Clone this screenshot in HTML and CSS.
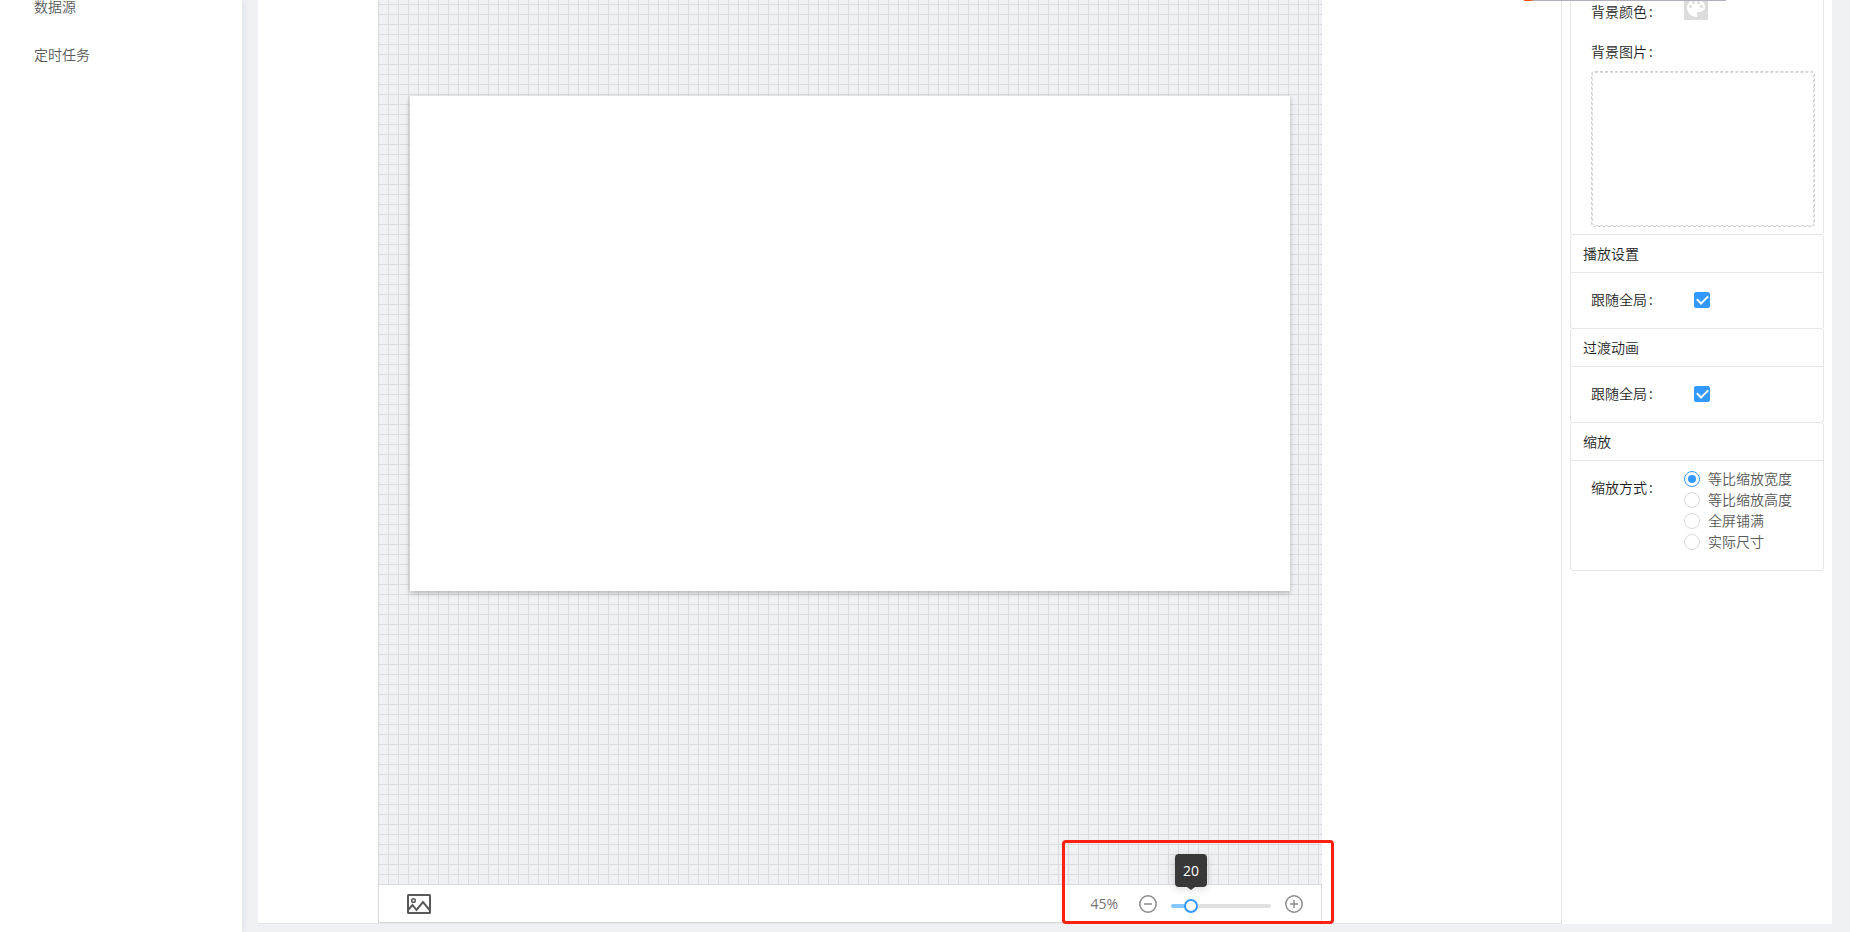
FILE: index.html
```html
<!DOCTYPE html>
<html lang="zh-CN">
<head>
<meta charset="utf-8">
<title>编辑器</title>
<link rel="stylesheet" href="styles.css">
</head>
<body>
<div class="app">
  <aside class="sidebar">
    <nav class="menu">
      <a class="menu-item" href="#source">数据源</a>
      <a class="menu-item" href="#tasks">定时任务</a>
    </nav>
  </aside>
  <div class="content">
    <main class="editor">
      <section class="stage">
        <div class="grid"><div class="sheet"></div></div>
        <div class="toolbar">
          <button class="icon-button" type="button" aria-label="图片">
            <svg width="24" height="20" viewBox="0 0 24 20" fill="none" stroke="#595959"><rect x="1" y="1" width="22" height="18" rx=".5" stroke-width="2"/><circle cx="6.500" cy="6.500" r="1.800" stroke-width="1.500"/><path d="M1.500 15.500 5.500 11l4 5 6.500-8 7 8.500" stroke-width="2"/></svg>
          </button>
          <div class="zoom">
            <span class="zoom-value">45%</span>
            <button class="icon-button" type="button" aria-label="缩小">
              <svg width="18" height="18" viewBox="0 0 18 18" fill="none" stroke="#8c8c8c" stroke-width="1.500"><circle cx="9" cy="9" r="8.200"/><path d="M5 9h8"/></svg>
            </button>
            <div class="slider">
              <input class="range" type="range" min="0" max="100" value="20" aria-label="缩放比例">
              <output class="tooltip">20</output>
            </div>
            <button class="icon-button" type="button" aria-label="放大">
              <svg width="18" height="18" viewBox="0 0 18 18" fill="none" stroke="#8c8c8c" stroke-width="1.500"><circle cx="9" cy="9" r="8.200"/><path d="M5 9h8M9 5v8"/></svg>
            </button>
          </div>
          <div class="highlight"></div>
        </div>
      </section>
    </main>
    <aside class="panel">
      <section class="card card-background">
        <div class="field">
          <label class="label" for="color">背景颜色</label>
          <button class="color" id="color" type="button" aria-label="背景颜色">
            <svg width="24" height="24" viewBox="0 0 24 24"><path fill="#fff" fill-rule="evenodd" d="M12 3a9 9 0 1 0 0 18c1 0 1.500-.7 1.500-1.500 0-.4-.2-.7-.4-1-.3-.3-.4-.6-.4-1 0-.8.7-1.500 1.500-1.500H16a5 5 0 0 0 5-5c0-4.400-4-8-9-8ZM6.500 12a1.500 1.500 0 1 1 0-3 1.500 1.500 0 0 1 0 3Zm3-4a1.500 1.500 0 1 1 0-3 1.500 1.500 0 0 1 0 3Zm5 0a1.500 1.500 0 1 1 0-3 1.500 1.500 0 0 1 0 3Zm3 4a1.500 1.500 0 1 1 0-3 1.500 1.500 0 0 1 0 3Z"/></svg>
          </button>
        </div>
        <div class="field">
          <label class="label" for="image">背景图片</label>
        </div>
        <button class="upload" id="image" type="button"></button>
      </section>
      <section class="card">
        <h2 class="card-title">播放设置</h2>
        <div class="card-body">
          <label class="label" for="play">跟随全局</label>
          <input class="check" id="play" type="checkbox" checked>
        </div>
      </section>
      <section class="card">
        <h2 class="card-title">过渡动画</h2>
        <div class="card-body">
          <label class="label" for="transition">跟随全局</label>
          <input class="check" id="transition" type="checkbox" checked>
        </div>
      </section>
      <section class="card">
        <h2 class="card-title">缩放</h2>
        <div class="card-body scale" role="radiogroup" aria-labelledby="scale-label">
          <span class="label" id="scale-label">缩放方式</span>
          <div class="options">
            <label class="option"><input class="radio" type="radio" name="scale" checked>等比缩放宽度</label>
            <label class="option"><input class="radio" type="radio" name="scale">等比缩放高度</label>
            <label class="option"><input class="radio" type="radio" name="scale">全屏铺满</label>
            <label class="option"><input class="radio" type="radio" name="scale">实际尺寸</label>
          </div>
        </div>
      </section>
    </aside>
    <div class="top-edge"></div>
  </div>
</div>
</body>
</html>
```
FILE: styles.css
```css
* {
  box-sizing: border-box;
}

body {
  margin: 0;
  background: #f0f1f5;
  color: #1f1f1f;
  font: 350 14px/20px "Open Sans", "Noto Sans CJK SC", sans-serif;
}

button,
input {
  margin: 0;
  padding: 0;
  border: 0;
  background: none;
  font: inherit;
}

svg {
  display: block;
}

.app {
  display: flex;
  height: 100vh;
  overflow: hidden;
}

.sidebar {
  flex: none;
  width: 242px;
  background: #fff;
  box-shadow: 2px 0 6px #00505014;
}

/* The menu is scrolled partly out of view. */
.menu {
  margin-top: -17px;
}

.menu-item {
  display: block;
  padding-left: 34px;
  color: #595959;
  line-height: 48px;
  text-decoration: none;
}

.content {
  position: relative;
  display: flex;
  flex: 1;
  margin: 0 18px 8px 16px;
  background: #fff;
}

.editor {
  display: flex;
  flex: 1;
  padding: 0 239px 0 120px;
  border: solid #e6e6e6;
  border-width: 0 1px 1px 0;
}

.stage {
  display: flex;
  flex: 1;
  flex-direction: column;
}

.grid {
  flex: 1;
  padding: 96px 32px 0 31px;
  border-left: 1px solid #d9d9d9;
  background-color: #f0f1f5;
  background-image:
    linear-gradient(90deg, transparent 9px, #dcdcdc 9px),
    linear-gradient(transparent 9px, #dcdcdc 9px);
  background-position: 0 0, 0 -5px;
  background-size: 10px 10px;
}

.sheet {
  aspect-ratio: 16 / 9;
  background: #fff;
  box-shadow: 0 2px 5px #00000040;
}

.toolbar {
  position: relative;
  display: flex;
  align-items: center;
  justify-content: space-between;
  height: 39px;
  padding: 0 18px 0 28px;
  border: 1px solid #d9d9d9;
  background: #fff;
}

.icon-button {
  cursor: pointer;
}

.zoom {
  display: flex;
  align-items: center;
}

.zoom-value {
  margin-right: 21px;
  color: #737373;
  font-weight: 400;
}

.slider {
  position: relative;
  display: flex;
  align-items: center;
  width: 100px;
  height: 4px;
  margin: 4px 14px 0;
  border-radius: 2px;
  background: linear-gradient(90deg, #85c8ff 20%, #e1e1e1 20%);
}

.range {
  flex: none;
  width: 114px;
  height: 14px;
  margin: 0 -7px;
  appearance: none;
}

.range::-webkit-slider-thumb {
  width: 14px;
  height: 14px;
  border: 2px solid #3399ff;
  border-radius: 50%;
  background: #fff;
  appearance: none;
}

.tooltip {
  position: absolute;
  bottom: 21px;
  left: 20%;
  padding: 7px 8px 6px;
  border-radius: 4px;
  background: #383838;
  box-shadow: 0 2px 8px #00000026;
  color: #fff;
  font-weight: 400;
  transform: translateX(-50%);
}

.tooltip::after {
  position: absolute;
  top: 100%;
  left: 50%;
  border: 4px solid transparent;
  border-top: 3px solid #383838;
  border-bottom: 0;
  content: "";
  transform: translateX(-50%);
}

.highlight {
  position: absolute;
  right: -13px;
  bottom: -2px;
  width: 272px;
  height: 84px;
  border: 3px solid #ff2010;
  border-radius: 4px;
  pointer-events: none;
}

.panel {
  flex: none;
  width: 270px;
  padding: 0 8px;
}

.card {
  margin-top: -1px;
  border: 1px solid #e6e6e6;
  border-radius: 3px;
}

.card-background {
  margin-top: -9px;
  padding: 0 8px 7px 20px;
}

.field {
  display: flex;
  align-items: center;
  height: 40px;
}

.field + .field {
  height: 39px;
}

.label {
  flex: none;
  width: 93px;
}

.label::after {
  margin-left: 2px;
  font-weight: 400;
  content: ":";
}

.color {
  align-self: flex-start;
  margin-top: 4px;
  border-radius: 1px;
  background: #dcdcdc;
}

.upload {
  display: block;
  width: 100%;
  height: 156px;
  border: 1px dashed #d0d0d0;
  border-radius: 4px;
  outline: 1px dashed #d9d9d9;
  outline-offset: -2px;
}

.card-title {
  margin: 0;
  padding: 9px 12px 8px;
  border-bottom: 1px solid #e6e6e6;
  font-size: 14px;
  font-weight: inherit;
}

.card-body {
  display: flex;
  align-items: center;
  height: 55px;
  padding: 0 0 2px 20px;
}

.check,
.radio {
  flex: none;
  width: 16px;
  height: 16px;
  border: 1px solid #d9d9d9;
  appearance: none;
}

.check {
  display: grid;
  margin-left: 10px;
  border-radius: 2px;
  place-items: center;
}

.check:checked {
  border-color: #3399ff;
  background: #3399ff;
}

.check:checked::after {
  width: 9px;
  height: 5px;
  margin-bottom: 2px;
  border: solid #fff;
  border-width: 0 0 2px 2px;
  content: "";
  transform: rotate(-45deg);
}

.radio {
  display: grid;
  margin-right: 8px;
  border-radius: 50%;
  place-items: center;
}

.radio:checked {
  border-color: #3399ff;
}

.radio:checked::after {
  width: 8px;
  height: 8px;
  border-radius: 50%;
  background: #3399ff;
  content: "";
}

.scale {
  align-items: flex-start;
  height: auto;
  padding: 7px 0 18px 20px;
}

.scale .label {
  padding-top: 10px;
}

.option {
  display: flex;
  align-items: center;
  height: 21px;
  color: #595959;
}

/* Bottom edge of the floating bar above the panel. */
.top-edge {
  position: absolute;
  top: 0;
  right: 106px;
  width: 202px;
  height: 1px;
  background: linear-gradient(90deg, #ff4b0a 6px, #b0b0bc 10px);
}
```
